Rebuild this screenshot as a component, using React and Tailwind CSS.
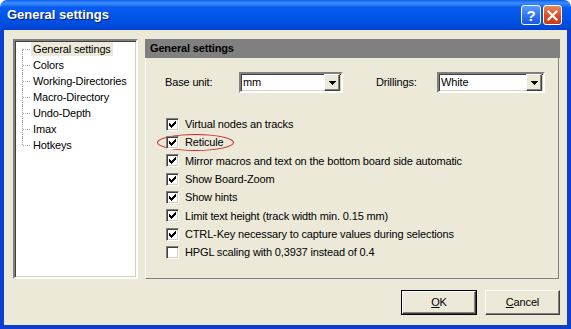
import React from "react";

const treeItems = [
  "General settings",
  "Colors",
  "Working-Directories",
  "Macro-Directory",
  "Undo-Depth",
  "Imax",
  "Hotkeys",
];

const options = [
  { label: "Virtual nodes an tracks", checked: true },
  { label: "Reticule", checked: true, circled: true },
  { label: "Mirror macros and text on the bottom board side automatic", checked: true },
  { label: "Show Board-Zoom", checked: true },
  { label: "Show hints", checked: true },
  { label: "Limit text height (track width min. 0.15 mm)", checked: true },
  { label: "CTRL-Key necessary to capture values during selections", checked: true },
  { label: "HPGL scaling with 0,3937 instead of 0.4", checked: false },
];

function CheckBox({ checked }) {
  return (
    <span className="w-[13px] h-[13px] shrink-0 bg-white border border-t-[#808080] border-l-[#808080] border-r-white border-b-white shadow-[inset_1px_1px_0_#404040,inset_-1px_-1px_0_#D4D0C8] relative">
      {checked && (
        <svg width="13" height="13" viewBox="0 0 13 13" className="absolute -left-px -top-px" shapeRendering="crispEdges">
          <polygon points="3,5 5,7 10,2 10,5 5,10 3,8" fill="#000" />
        </svg>
      )}
    </span>
  );
}

function Combo({ value, width }) {
  return (
    <div className={`${width} h-[21px] bg-white flex items-center border-2 border-t-[#808080] border-l-[#808080] border-r-white border-b-white shadow-[inset_1px_1px_0_#404040,inset_-1px_-1px_0_#D4D0C8]`}>
      <span className="flex-1 pl-[2px]">{value}</span>
      <span className="w-[16px] h-[17px] mr-[1px] bg-[#ECE9D8] flex items-center justify-center border border-t-white border-l-white border-r-[#404040] border-b-[#404040] shadow-[inset_-1px_-1px_0_#808080]">
        <svg width="7" height="4" viewBox="0 0 7 4" shapeRendering="crispEdges">
          <polygon points="0,0 7,0 3.5,4" fill="#000" />
        </svg>
      </span>
    </div>
  );
}

export default function App() {
  return (
    <div className="w-[571px] h-[329px] bg-white flex flex-col text-[11px] tracking-[-0.15px] text-black" style={{ fontFamily: '"Liberation Sans", Arial, sans-serif' }}>
      {/* Titelleiste */}
      <div className="h-[30px] shrink-0 rounded-t-[7px] flex items-center pl-[7px] pr-[9px] bg-[linear-gradient(to_bottom,#0A5DF2_0%,#3D8FFA_10%,#0A5CF0_25%,#0054E6_60%,#0049D9_90%,#0040CC_100%)]">
        <span className="flex-1 text-white font-bold text-[13px] tracking-normal [text-shadow:1px_1px_0_#0A1E7A]">General settings</span>
        <span className="w-[20px] h-[20px] mr-[2px] rounded-[3px] border border-white bg-[linear-gradient(to_bottom,#5C9BFF,#2D6FF5_60%,#1B56E0)] flex items-center justify-center text-white font-bold text-[15px] leading-none">?</span>
        <span className="w-[19px] h-[20px] rounded-[3px] border border-white bg-[linear-gradient(to_bottom,#E9895F,#DD4A22_55%,#C53A14)] flex items-center justify-center">
          <svg width="11" height="11" viewBox="0 0 11 11">
            <path d="M1.5 1.5 L9.5 9.5 M9.5 1.5 L1.5 9.5" stroke="#fff" strokeWidth="2.2" strokeLinecap="square" />
          </svg>
        </span>
      </div>

      {/* Fensterinhalt */}
      <div className="flex-1 flex flex-col bg-[#ECE9D8] border-x-4 border-b-4 border-[#0A3FD2] pl-[9px] pr-[7px] pt-[9px] pb-[10px]">
        <div className="h-[240px] flex gap-[7px]">
          {/* Baum */}
          <div className="w-[125px] bg-white border-2 border-t-[#808080] border-l-[#808080] border-r-white border-b-white shadow-[inset_1px_1px_0_#404040,inset_-1px_-1px_0_#D4D0C8]">
            {treeItems.map((item, i) => (
              <div key={item} className="relative h-[16px] flex items-center pl-[16px]">
                <span
                  className={`absolute left-[7px] border-l border-dotted border-[#A0A0A0] ${
                    i === 0 ? "top-[8px] bottom-0" : i === treeItems.length - 1 ? "top-0 h-[8px]" : "top-0 bottom-0"
                  }`}
                />
                <span className="absolute left-[8px] top-[8px] w-[7px] border-t border-dotted border-[#A0A0A0]" />
                <span className={`px-[2px] h-[14px] flex items-center ${i === 0 ? "bg-[#ECE9D8]" : ""}`}>{item}</span>
              </div>
            ))}
          </div>

          {/* Einstellungen */}
          <div className="flex-1 flex flex-col">
            <div className="h-[19px] bg-[#808080] font-bold flex items-center pl-[5px]">General settings</div>
            <div className="flex-1 mr-[1px] border border-l-white border-t-0 border-r-[#808080] border-b-[#808080] pt-[14px] pl-[19px]">
              <div className="flex items-center">
                <span className="w-[74px]">Base unit:</span>
                <Combo value="mm" width="w-[104px]" />
                <span className="ml-[33px] w-[61px]">Drillings:</span>
                <Combo value="White" width="w-[108px]" />
              </div>

              <div className="mt-[22px] pl-[1px]">
                {options.map((opt) => (
                  <div key={opt.label} className="relative h-[18.33px] flex items-center gap-[6px]">
                    {opt.circled && (
                      <span className="absolute left-[-9px] top-[1px] w-[77px] h-[17px] rounded-[50%] border border-[#D02828]" />
                    )}
                    <CheckBox checked={opt.checked} />
                    <span>{opt.label}</span>
                  </div>
                ))}
              </div>
            </div>
          </div>
        </div>

        {/* Knöpfe */}
        <div className="mt-[11px] flex justify-end gap-[8px]">
          <button className="w-[76px] h-[25px] border border-black bg-[#ECE9D8] p-0">
            <span className="w-full h-full flex items-center justify-center border border-t-white border-l-white border-r-[#404040] border-b-[#404040] shadow-[inset_-1px_-1px_0_#808080]">
              <span><u>O</u>K</span>
            </span>
          </button>
          <button className="w-[75px] h-[25px] bg-[#ECE9D8] flex items-center justify-center border border-t-white border-l-white border-r-[#404040] border-b-[#404040] shadow-[inset_-1px_-1px_0_#808080]">
            <span><u>C</u>ancel</span>
          </button>
        </div>
      </div>
    </div>
  );
}
